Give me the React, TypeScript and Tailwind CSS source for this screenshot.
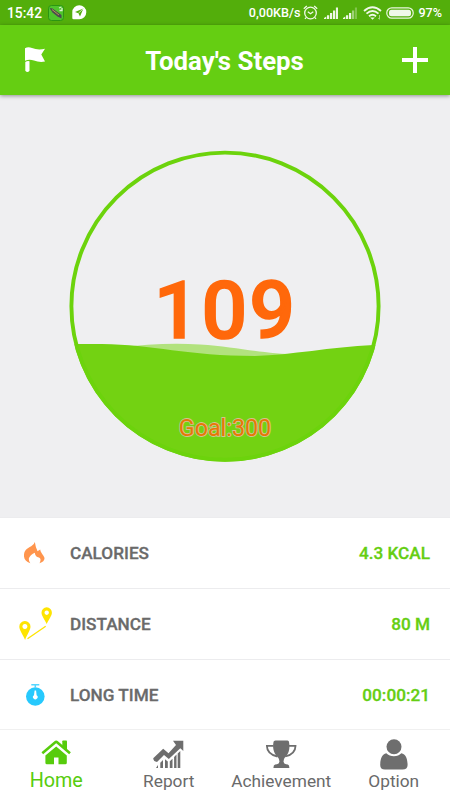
import type { ReactNode } from "react";

type Tab = { label: string; icon: ReactNode; active?: boolean };
type Stat = { label: string; value: string; icon: ReactNode };

const STATS: Stat[] = [
  { label: "CALORIES", value: "4.3 KCAL", icon: <FlameIcon /> },
  { label: "DISTANCE", value: "80 M", icon: <RouteIcon /> },
  { label: "LONG TIME", value: "00:00:21", icon: <StopwatchIcon /> },
];

const TABS: Tab[] = [
  { label: "Home", icon: <HomeIcon />, active: true },
  { label: "Report", icon: <ReportIcon /> },
  { label: "Achievement", icon: <TrophyIcon /> },
  { label: "Option", icon: <PersonIcon /> },
];

export default function App() {
  return (
    <div className="flex h-[800px] w-[450px] flex-col overflow-hidden bg-[#efeff1] font-['Roboto',sans-serif]">
      <StatusBar />
      <header className="z-10 flex h-[70px] shrink-0 items-center justify-between bg-[#65ce12] pr-[22px] pl-[25px] shadow-[0_1px_4px_rgba(0,0,0,0.4)]">
        <FlagIcon />
        <h1 className="mt-[2px] mr-[4px] text-[25.8px] leading-[30px] font-bold text-white">Today&apos;s Steps</h1>
        <svg className="h-[26px] w-[26px]" viewBox="0 0 26 26">
          <path d="M13 0v26M0 13h26" stroke="#fff" strokeWidth="4" />
        </svg>
      </header>
      <main className="flex h-[422px] shrink-0 justify-center pt-[55px]">
        <StepGauge steps={109} goal={300} />
      </main>
      <section className="shrink-0 bg-white">
        {STATS.map((s) => (
          <StatRow key={s.label} stat={s} />
        ))}
      </section>
      <nav className="grid h-[71px] shrink-0 grid-cols-4 border-t border-[#f0f0f0] bg-white">
        {TABS.map((t) => (
          <TabItem key={t.label} tab={t} />
        ))}
      </nav>
    </div>
  );
}

function StatusBar() {
  return (
    <div className="flex h-[25px] shrink-0 items-center bg-[#53ae0b] pr-2 pl-[7px] text-white">
      <span className="w-[41px] pt-px text-[13.8px] leading-[25px] font-medium">15:42</span>
      <svg className="h-4 w-4" viewBox="0 0 16 16">
        <rect x="0.5" y="0.5" width="15" height="15" rx="3" fill="#4fc52c" stroke="#2b9512" />
        <path d="M1.500 3l3 0.500L8 6l5.500 4v3.500l-4-2-5-4z" fill="#4c4a50" />
        <path d="M4 4.500l7 5.500" stroke="#b59a50" />
        <path d="M11 3l2.500-1M11.500 5.500h2.500V3" fill="none" stroke="#d9efcf" strokeWidth="1.300" />
      </svg>
      <svg className="ml-2 h-[15px] w-[15px]" viewBox="0 0 15 15">
        <path d="M7.3 0.2a7 7 0 1 1 0 14H1.6Q0.3 14.2 0.3 12.9V7.2a7 7 0 0 1 7-7z" fill="#fff" />
        <path d="M11.4 3.4L3 7l3.4 1.2L8 11.6z" fill="#53ae0b" />
        <path d="M11 4L6.4 8.2" stroke="#fff" strokeWidth="0.7" />
      </svg>
      <span className="ml-auto pt-px text-[12.6px] leading-[24px] font-medium">0,00KB/s</span>
      <svg className="ml-[3px] h-[15px] w-[15px]" viewBox="0 0 15 15" fill="none" stroke="#f0f8e9" strokeWidth="1.3">
        <circle cx="7.5" cy="8" r="5.8" />
        <path d="M4.8 6.8l2.7 2 2.8-2M0.8 3.8l3-2.8M14.2 3.8l-3-2.8M3 12.6l-1 1.2M12 12.6l1 1.2" />
      </svg>
      <SignalIcon weak={false} className="ml-[6px] h-3 w-[14px]" />
      <SignalIcon weak className="ml-[5px] h-3 w-[14px]" />
      <svg className="ml-[6px] h-[14px] w-[19px]" viewBox="0 0 19 14" fill="none" stroke="#f0f8e9" strokeWidth="1.8">
        <path d="M1 5q8.500-7.500 17 0M3.500 7.700q6-5.300 12 0M6 10.200q3.500-3 7 0" />
        <path d="M7.200 11.400h4.600l-2.300 2.300z" fill="#f0f8e9" stroke="none" />
        <path d="M16.500 9v4M15.300 12l1.200 1.500" stroke="#a9d685" strokeWidth="1" />
      </svg>
      <svg className="ml-1 h-3 w-7" viewBox="0 0 28 12">
        <rect x="0.8" y="0.8" width="26.400" height="10.400" rx="5" fill="none" stroke="#eaf6e0" strokeWidth="1.200" />
        <rect x="3" y="2.800" width="22" height="6.400" rx="2.500" fill="#f0f8e9" />
      </svg>
      <span className="ml-1 pt-px text-[12.6px] leading-[24px] font-medium">97%</span>
    </div>
  );
}

function SignalIcon({ weak, className }: { weak: boolean; className: string }) {
  return (
    <svg className={className} viewBox="0 0 14 12" fill="#eef7e7">
      <path d="M0 12v-1l2.300-1.500V12zM3 8.300h2.200V12H3zM6 6h2.200v6H6z" />
      <path d="M9 3.500h2.200V12H9z" opacity={weak ? 0.5 : 1} />
      <path d="M11.900 0.500H14V12h-2.100z" opacity={weak ? 0.3 : 1} />
    </svg>
  );
}

function StepGauge({ steps, goal }: { steps: number; goal: number }) {
  return (
    <div className="relative h-[312px] w-[312px]">
      <svg className="h-full w-full" viewBox="69 150 312 312">
        <clipPath id="water">
          <circle cx="225" cy="306.200" r="155.500" />
        </clipPath>
        <g clipPath="url(#water)">
          <path d="M120 348C145 344 174 343 200 344.500C238 347 262 354 300 354.500V364H120z" fill="#b2e27e" />
          <path
            d="M76.500 344H102C153 344.500 187 356 255 356C292 355 330 347 373.500 345L382 345V470H60V344z"
            fill="#73d212"
          />
        </g>
        <circle cx="225" cy="306.200" r="153.600" fill="none" stroke="#6cd30c" strokeWidth="3.900" />
      </svg>
      <span className="absolute top-[111px] left-0 w-full pl-px text-center text-[80.500px] leading-[100px] font-medium tracking-[2px] text-[#ff680b] [-webkit-text-stroke:1.6px_#ff680b]">
        {steps}
      </span>
      <span className="absolute top-[264px] left-0 w-full text-center text-[23.3px] leading-[28px] text-[#e87706] [-webkit-text-stroke:1.8px_#cfc492] [paint-order:stroke_fill]">
        Goal:{goal}
      </span>
    </div>
  );
}

function StatRow({ stat }: { stat: Stat }) {
  return (
    <div className="flex h-[71px] items-center border-t border-[#ececee] pr-5 last:h-[70px] last:pt-px">
      <div className="flex w-[70px] justify-center">{stat.icon}</div>
      <span className="pt-[2px] text-[17.200px] font-medium text-[#6a6a6a] [-webkit-text-stroke:0.3px_#6a6a6a]">
        {stat.label}
      </span>
      <span className="ml-auto pt-[2px] text-[17.200px] font-medium text-[#65ce12] [-webkit-text-stroke:0.3px_#65ce12]">
        {stat.value}
      </span>
    </div>
  );
}

function TabItem({ tab }: { tab: Tab }) {
  return (
    <div
      className={`flex flex-col items-center pt-[9px] ${tab.active ? "text-[#57cc0d]" : "text-[#6a6a6a]"}`}
    >
      <div className="h-[30px]">{tab.icon}</div>
      <span className={tab.active ? "text-[19.8px] leading-[24px]" : "text-[17.300px] leading-[25px]"}>
        {tab.label}
      </span>
    </div>
  );
}

function FlagIcon() {
  return (
    <svg className="h-[26px] w-[26px]" viewBox="25 47 26 26" fill="#fff">
      <path d="M25 48.300Q28 46.500 32 48Q38 50.500 45 48.700L41.300 54.500L45 61.600Q39 62.500 34 60.600Q29.500 59 25 60.700z" />
      <path d="M25.300 62q2-1.500 4.200-0.800v9.500q-2.100 2.500-4.200 0z" />
    </svg>
  );
}

function FlameIcon() {
  return (
    <svg className="mr-[2px] h-[22px] w-[21px]" viewBox="24 542 21 22" fill="#ff954d">
      <path d="M34.800 542C35.600 544.800 35.500 547 36.800 549.300L37.500 551.300L40.200 549.500C40.300 552.500 44 555.500 44.500 558Q44.700 561.500 39.500 563.200C41.800 558.500 39.800 557.600 38 557.200Q35.300 556.500 34.800 552.700C32.300 553.700 29 556.500 28.800 559Q28.800 561.500 30.300 563.200C25.500 561.500 23.600 558.500 24 554.500C24.500 549.500 28.500 547.500 31.200 546.200Q34.300 544.500 34.800 542z" />
    </svg>
  );
}

function RouteIcon() {
  return (
    <svg className="ml-[1px] h-[34px] w-[34px] shrink-0" viewBox="18.500 607 34 34" fill="#fee400">
      <path
        fillRule="evenodd"
        d="M46.200 607.300a5.200 5.200 0 0 1 5.200 5.400c0 3-3.400 7.300-5.200 11.300c-1.800-4-5.200-8.300-5.200-11.300a5.200 5.200 0 0 1 5.200-5.400zM46.200 610.500a2.200 2.200 0 1 0 0.010 0z"
      />
      <path
        fillRule="evenodd"
        d="M24.400 621a5.500 5.500 0 0 1 5.600 5.700c0 3.300-3.700 8-5.400 13.300c-2-5.300-5.800-10-5.800-13.300a5.500 5.500 0 0 1 5.600-5.700zM24.400 624a2.500 2.500 0 1 0 0.010 0z"
      />
      <path d="M27 638.800L45.200 626.200" stroke="#fee400" strokeWidth="1.300" />
    </svg>
  );
}

function StopwatchIcon() {
  return (
    <svg className="h-[22px] w-[19px]" viewBox="25.500 684 19 22">
      <circle cx="34.800" cy="696.500" r="9.300" fill="#27c9fd" />
      <path d="M30.800 684.700h8M34.800 684.700v3" stroke="#55d6ff" strokeWidth="1.500" />
      <path d="M34.100 690.500h1.500l0.500 4.700a2.300 2.300 0 1 1-2.600 0z" fill="#fff" />
    </svg>
  );
}

function HomeIcon() {
  return (
    <svg className="mt-px h-[25px] w-[30px]" viewBox="41 739.500 30 25" fill="#57cc0d">
      <path d="M56.200 745.900L66.800 755V762.200Q66.800 763.800 65.300 763.800H58.500V757H54V763.800H46.900Q45.400 763.800 45.400 762.200V755z" />
      <path
        d="M42.300 752.700L55 741.900Q56.200 740.900 57.400 741.900L70 752.700"
        fill="none"
        stroke="#57cc0d"
        strokeWidth="2.600"
      />
      <path d="M62.300 740.700Q62.300 740 63.100 740H66.200Q67 740 67 740.700V750L62.300 746z" />
    </svg>
  );
}

function ReportIcon() {
  return (
    <svg className="mt-[1px] h-[28px] w-[31px]" viewBox="153.500 740.500 31 28" fill="#6e6e6e">
      <path d="M173.500 741.200H183.800V751.500L180.800 748.700L169.300 759.500L164.500 755.400L157.500 762.500Q154 762.200 153.700 758.800L163.700 749.200L169 753.700L176.500 745.500z" />
      <path d="M156.500 768.500L158.500 765.500V768.500zM160.800 763.300L163.500 760.500V768.500H160.800zM165.500 759.700L168.300 762V768.500H165.500zM170.300 761.700L173 759.200V768.500H170.300zM174.600 757.500L177 755V768.500H174.600zM178.200 754L180.800 751.500V768.500H178.200z" />
    </svg>
  );
}

function TrophyIcon() {
  return (
    <svg className="mt-[1px] h-[28px] w-[31px]" viewBox="266 740.500 31 28" fill="#6e6e6e">
      <path d="M275.500 741H287.500Q289 741 289 742.500C290.500 750 288 755 285.200 757.500Q283.300 759.500 283.500 764.500H279.500Q279.700 759.500 277.700 757.500C275 755 272 750 273.500 742.500Q273.500 741 275.500 741z" />
      <path
        d="M273.500 746.400H266.900C267 753.300 271.500 755.600 277.500 757M289 746.400H295.500C295.400 753.300 291 755.600 285.200 757"
        fill="none"
        stroke="#6e6e6e"
        strokeWidth="1.800"
      />
      <path d="M279.500 762.500h4q0.500 2 4.300 2.500q1.600 0.500 1.600 3.700h-16q0-3.200 1.700-3.700q3.900-0.500 4.400-2.500z" />
    </svg>
  );
}

function PersonIcon() {
  return (
    <svg className="h-[31px] w-[28px]" viewBox="380 739.500 28 31" fill="#6e6e6e">
      <circle cx="394" cy="747.300" r="7.500" />
      <path d="M386.300 753.800C390 757.800 398 757.800 401.300 753.800C406 754.800 407.400 759 407.600 765.500Q407.500 770 402.500 770H385Q380.200 770 380.200 765.500C380.300 759 382 754.800 386.300 753.800z" />
    </svg>
  );
}
